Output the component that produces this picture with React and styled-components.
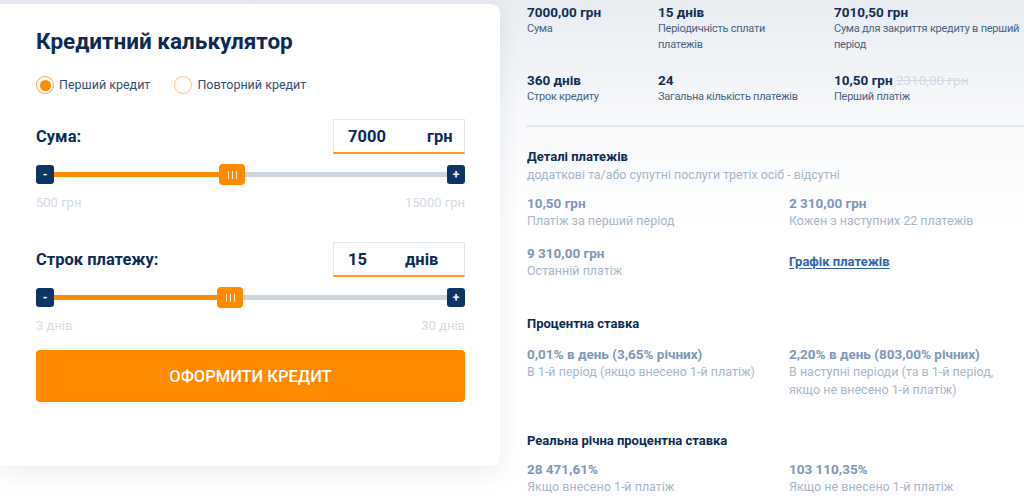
import React from "react";
import styled, { createGlobalStyle } from "styled-components";

const GlobalStyle = createGlobalStyle`
  body {
    margin: 0;
    font-family: Roboto, "Noto Sans", sans-serif;
    background: linear-gradient(180deg, #e8ecf1 0px, #f6f8fa 110px, #ffffff 220px);
  }
  * { box-sizing: border-box; }
`;

const Page = styled.div`
  display: flex;
  width: 1024px;
  height: 499px;
  overflow: hidden;
`;

const Card = styled.div`
  flex: 0 0 500px;
  height: 462px;
  margin-top: 4px;
  padding: 24px 35px 0 36px;
  background: #fff;
  border-radius: 0 9px 9px 0;
  box-shadow: 0 6px 22px rgba(24, 56, 98, 0.09);
`;

const Title = styled.h1`
  margin: 0;
  font-size: 22.5px;
  line-height: 26px;
  font-weight: 700;
  color: #0b2b56;
`;

const RadioRow = styled.div`
  display: flex;
  gap: 24px;
  margin-top: 22px;
`;

const RadioLabel = styled.label`
  display: flex;
  align-items: center;
  gap: 5px;
  font-size: 12.5px;
  line-height: 18px;
  color: #34506f;
`;

const RadioDot = styled.span`
  width: 18px;
  height: 18px;
  border-radius: 50%;
  border: 1.5px solid ${(p) => (p.$checked ? "#ffa13a" : "#ffc47e")};
  display: flex;
  align-items: center;
  justify-content: center;
  &::after {
    content: "";
    width: 11px;
    height: 11px;
    border-radius: 50%;
    background: ${(p) => (p.$checked ? "#ff8a00" : "transparent")};
  }
`;

const FieldRow = styled.div`
  display: flex;
  align-items: center;
  justify-content: space-between;
  margin-top: ${(p) => p.$top}px;
`;

const FieldLabel = styled.span`
  font-size: 16.5px;
  font-weight: 700;
  color: #0b2b56;
`;

const InputBox = styled.div`
  display: flex;
  align-items: center;
  width: 132px;
  height: 35px;
  padding-left: 14px;
  border: 1px solid #e2e6ec;
  border-bottom: 2px solid #ff9a22;
  font-size: 16.5px;
  font-weight: 700;
  color: #0b2b56;
`;

const InputValue = styled.span`
  width: ${(p) => p.$width}px;
`;

const SliderRow = styled.div`
  display: flex;
  align-items: center;
  height: 19px;
  margin-top: 11px;
`;

const StepButton = styled.span`
  flex: 0 0 18px;
  height: 19px;
  border-radius: 3px;
  background: #0c3564;
  color: #fff;
  font-size: 12px;
  font-weight: 700;
  display: flex;
  align-items: center;
  justify-content: center;
`;

const Track = styled.div`
  position: relative;
  flex: 1;
  height: 5px;
  background: #cdd5df;
`;

const Fill = styled.div`
  height: 100%;
  background: #ff8a00;
`;

const Thumb = styled.div`
  position: absolute;
  top: -8px;
  width: 26px;
  height: 21px;
  border-radius: 4px;
  background: #ff8a00;
  display: flex;
  align-items: center;
  justify-content: center;
  gap: 3px;
  span {
    width: 1px;
    height: 8px;
    background: rgba(255, 255, 255, 0.8);
  }
`;

const RangeLabels = styled.div`
  display: flex;
  justify-content: space-between;
  margin-top: 11px;
  font-size: 13px;
  line-height: 16px;
  color: #d3dae3;
`;

const SubmitButton = styled.button`
  display: block;
  width: 100%;
  height: 52px;
  margin-top: 16px;
  border: none;
  border-radius: 4px;
  background: #ff8a00;
  color: #fff;
  font-family: inherit;
  font-size: 16.5px;
  font-weight: 500;
  text-transform: uppercase;
`;

const Panel = styled.div`
  flex: 1;
  padding: 4px 0 0 27px;
`;

const StatsGrid = styled.div`
  display: grid;
  grid-template-columns: 131px 176px 1fr;
  row-gap: 20px;
`;

const StatValue = styled.div`
  font-size: 13.5px;
  line-height: 17px;
  font-weight: 700;
  color: #0f2d55;
  white-space: nowrap;
`;

const OldPrice = styled.span`
  font-weight: 400;
  color: #d2d9e2;
  text-decoration: line-through;
`;

const StatLabel = styled.div`
  font-size: 11px;
  line-height: 15.5px;
  letter-spacing: -0.25px;
  color: #48627f;
  white-space: nowrap;
`;

const Divider = styled.hr`
  margin: 20px 0 0 -1px;
  border: none;
  height: 2px;
  background: #e6eaef;
`;

const Section = styled.section`
  margin-top: ${(p) => p.$top}px;
`;

const Heading = styled.h3`
  margin: 0;
  font-size: 13px;
  line-height: 18px;
  font-weight: 700;
  color: #0b2b56;
`;

const Note = styled.div`
  font-size: 12.4px;
  line-height: 18px;
  color: #a6b5c8;
`;

const DetailGrid = styled.div`
  display: grid;
  grid-template-columns: 262px 225px;
  row-gap: 14px;
  margin-top: ${(p) => p.$top}px;
`;

const DetailValue = styled.div`
  font-size: 13.5px;
  line-height: 18px;
  font-weight: 700;
  color: #7e97b7;
  white-space: nowrap;
`;

const DetailLabel = styled.div`
  font-size: 12.5px;
  line-height: 18px;
  color: #a8b7ca;
  white-space: nowrap;
`;

const ScheduleLink = styled.a`
  align-self: center;
  justify-self: start;
  font-size: 13px;
  font-weight: 700;
  color: #2f67ab;
  text-decoration: underline;
  text-underline-offset: 2px;
`;

const Slider = ({ percent, min, max }) => (
  <>
    <SliderRow>
      <StepButton>-</StepButton>
      <Track>
        <Fill style={{ width: `${percent}%` }} />
        <Thumb style={{ left: `${percent}%` }}>
          <span />
          <span />
          <span />
        </Thumb>
      </Track>
      <StepButton>+</StepButton>
    </SliderRow>
    <RangeLabels>
      <span>{min}</span>
      <span>{max}</span>
    </RangeLabels>
  </>
);

const Detail = ({ value, label }) => (
  <div>
    <DetailValue>{value}</DetailValue>
    <DetailLabel>{label}</DetailLabel>
  </div>
);

const Stat = ({ value, label }) => (
  <div>
    <StatValue>{value}</StatValue>
    <StatLabel>{label}</StatLabel>
  </div>
);

export default function App() {
  return (
    <Page>
      <GlobalStyle />
      <Card>
        <Title>Кредитний калькулятор</Title>
        <RadioRow>
          <RadioLabel>
            <RadioDot $checked />
            Перший кредит
          </RadioLabel>
          <RadioLabel>
            <RadioDot />
            Повторний кредит
          </RadioLabel>
        </RadioRow>

        <FieldRow $top={25}>
          <FieldLabel>Сума:</FieldLabel>
          <InputBox>
            <InputValue $width={79}>7000</InputValue>
            <span>грн</span>
          </InputBox>
        </FieldRow>
        <Slider percent={42} min="500 грн" max="15000 грн" />

        <FieldRow $top={31}>
          <FieldLabel>Строк платежу:</FieldLabel>
          <InputBox>
            <InputValue $width={57}>15</InputValue>
            <span>днів</span>
          </InputBox>
        </FieldRow>
        <Slider percent={41.6} min="3 днів" max="30 днів" />

        <SubmitButton>Оформити кредит</SubmitButton>
      </Card>

      <Panel>
        <StatsGrid>
          <Stat value="7000,00 грн" label="Сума" />
          <Stat
            value="15 днів"
            label={<>Періодичність сплати<br />платежів</>}
          />
          <Stat
            value="7010,50 грн"
            label={<>Сума для закриття кредиту в перший<br />період</>}
          />
          <Stat value="360 днів" label="Строк кредиту" />
          <Stat value="24" label="Загальна кількість платежів" />
          <Stat
            value={<>10,50 грн <OldPrice>2310,00 грн</OldPrice></>}
            label="Перший платіж"
          />
        </StatsGrid>
        <Divider />

        <Section $top={21}>
          <Heading>Деталі платежів</Heading>
          <Note>додаткові та/або супутні послуги третіх осіб - відсутні</Note>
          <DetailGrid $top={10}>
            <Detail value="10,50 грн" label="Платіж за перший період" />
            <Detail value="2 310,00 грн" label="Кожен з наступних 22 платежів" />
            <Detail value="9 310,00 грн" label="Останній платіж" />
            <ScheduleLink href="#">Графік платежів</ScheduleLink>
          </DetailGrid>
        </Section>

        <Section $top={35}>
          <Heading>Процентна ставка</Heading>
          <DetailGrid $top={12}>
            <Detail
              value="0,01% в день (3,65% річних)"
              label="В 1-й період (якщо внесено 1-й платіж)"
            />
            <Detail
              value="2,20% в день (803,00% річних)"
              label={<>В наступні періоди (та в 1-й період,<br />якщо не внесено 1-й платіж)</>}
            />
          </DetailGrid>
        </Section>

        <Section $top={33}>
          <Heading>Реальна річна процентна ставка</Heading>
          <DetailGrid $top={10}>
            <Detail value="28 471,61%" label="Якщо внесено 1-й платіж" />
            <Detail value="103 110,35%" label="Якщо не внесено 1-й платіж" />
          </DetailGrid>
        </Section>
      </Panel>
    </Page>
  );
}
